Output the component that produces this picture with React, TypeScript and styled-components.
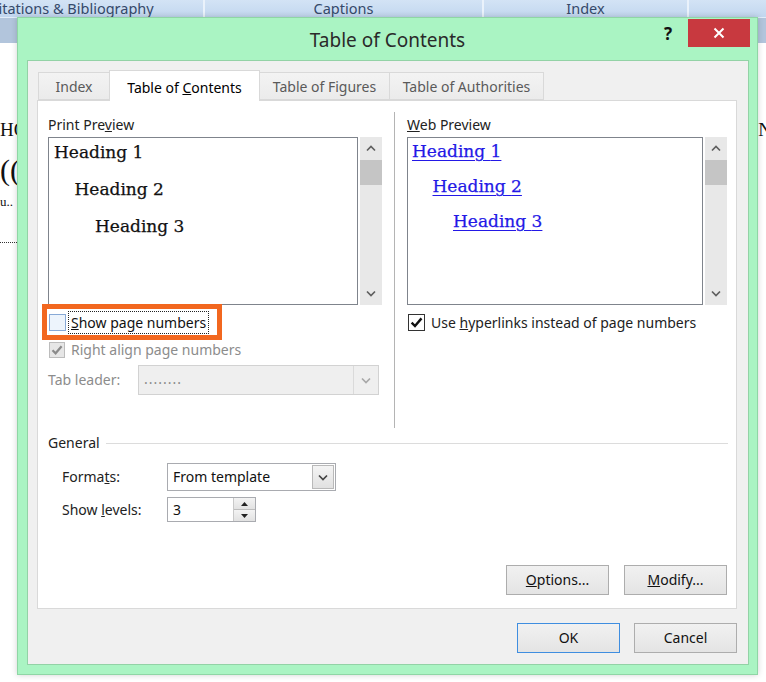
import React from "react";
import styled, { createGlobalStyle } from "styled-components";

const GlobalStyle = createGlobalStyle`
  html, body {
    margin: 0;
    padding: 0;
    background: #fff;
  }
  body {
    font-family: "Noto Sans", "Open Sans", sans-serif;
  }
  * {
    box-sizing: border-box;
  }
`;

/**
 * Word window behind the dialog
 */
const Desktop = styled.div`
  position: relative;
  width: 766px;
  height: 682px;
  overflow: hidden;
  background: #fff;
`;

const RibbonTabs = styled.div`
  display: flex;
  height: 17px;
  background: linear-gradient(#d3e3f5, #c2d7ef);
  overflow: hidden;
`;

const RibbonTab = styled.div<{ $w: number; $shift?: number }>`
  flex: 0 0 ${(p) => p.$w}px;
  margin-left: ${(p) => p.$shift ?? 0}px;
  border-right: 2px solid #eaf2fb;
  text-align: center;
  font-size: 14.5px;
  line-height: 16px;
  color: #35496a;
  white-space: nowrap;
  overflow: hidden;
`;

const RibbonBand = styled.div`
  height: 26px;
  background: #b2c5dc;
  border-top: 1px solid #e2edf9;
`;

const Doc = styled.div`
  padding-top: 75px;
  font-family: "Liberation Serif", serif;
  color: #111;
`;

const DocLine = styled.div<{ $size: number; $lh: number; $gap?: number }>`
  display: flex;
  justify-content: space-between;
  width: 772px;
  margin-top: ${(p) => p.$gap ?? 0}px;
  font-size: ${(p) => p.$size}px;
  line-height: ${(p) => p.$lh}px;
  white-space: nowrap;
`;

const DottedRule = styled.div`
  width: 17px;
  margin-top: 32px;
  border-top: 1px dotted #333;
`;

/**
 * Dialog window
 */
const Dialog = styled.div`
  position: absolute;
  left: 17px;
  top: 17px;
  width: 741px;
  height: 658px;
  display: flex;
  flex-direction: column;
  background: #aaf4c3;
  border: 1px solid #8fd6a5;
  box-shadow: 0 0 6px rgba(0, 0, 0, 0.18);
`;

const TitleBar = styled.div`
  display: grid;
  grid-template-columns: 1fr auto 1fr;
  height: 42px;
`;

const TitleText = styled.div`
  grid-column: 2;
  padding-top: 10px;
  font-size: 19px;
  line-height: 24px;
  color: #2a2a2a;
`;

const TitleControls = styled.div`
  grid-column: 3;
  justify-self: end;
  display: flex;
  align-items: center;
  gap: 16px;
  height: 28px;
  margin: 1px 7px 0 0;
`;

const HelpMark = styled.span`
  font-size: 17px;
  font-weight: 700;
  color: #111;
`;

const CloseButton = styled.div`
  width: 62px;
  height: 28px;
  display: flex;
  align-items: center;
  justify-content: center;
  background: #c8393f;
`;

const Body = styled.div`
  flex: 1;
  display: flex;
  flex-direction: column;
  margin: 0 8px 9px 9px;
  padding: 9px 11px 11px 9px;
  background: #f0f0f0;
  border: 1px solid #93d2a6;
`;

const TabsRow = styled.div`
  position: relative;
  z-index: 2;
  display: flex;
  align-items: flex-end;
  height: 31px;
  margin-left: 1px;
`;

const Tab = styled.div<{ $w: number; $active?: boolean }>`
  width: ${(p) => p.$w}px;
  height: ${(p) => (p.$active ? 31 : 28)}px;
  margin-bottom: ${(p) => (p.$active ? 0 : 1)}px;
  margin-left: -1px;
  border: 1px solid #d9d9d9;
  border-bottom: ${(p) => (p.$active ? "none" : "1px solid #d9d9d9")};
  background: ${(p) => (p.$active ? "#fff" : "linear-gradient(#f3f3f3, #ebebeb)")};
  color: ${(p) => (p.$active ? "#000" : "#5a5a5a")};
  font-size: 14px;
  line-height: ${(p) => (p.$active ? 34 : 28)}px;
  text-align: center;
  white-space: nowrap;
  &:first-child {
    margin-left: 0;
  }
`;

const TabPanel = styled.div`
  display: flex;
  flex-direction: column;
  height: 509px;
  margin-top: -1px;
  padding: 11px 9px 13px 10px;
  background: #fff;
  border: 1px solid #d9d9d9;
`;

const TopSection = styled.div`
  display: grid;
  grid-template-columns: 334px 1px 1fr;
  column-gap: 12px;
  height: 316px;
`;

const Column = styled.div`
  display: flex;
  flex-direction: column;
`;

const Divider = styled.div`
  background: #b4b4b4;
`;

const Label = styled.div<{ $muted?: boolean }>`
  font-size: 14px;
  line-height: 18px;
  color: ${(p) => (p.$muted ? "#8c8c8c" : "#222")};
  white-space: nowrap;
`;

const GroupLabel = styled(Label)`
  margin-top: 4px;
`;

const PreviewRow = styled.div`
  display: flex;
  gap: 2px;
  height: 168px;
  margin-top: 3px;
`;

const ListBox = styled.div<{ $pad: number }>`
  flex: 1;
  display: flex;
  flex-direction: column;
  gap: 9px;
  padding-left: ${(p) => p.$pad}px;
  background: #fff;
  border: 1px solid #7f848c;
`;

const Entry = styled.div<{ $level: number; $link?: boolean }>`
  padding-left: ${(p) => (p.$level - 1) * 20.5}px;
  font-family: "DejaVu Serif", "Liberation Serif", serif;
  font-size: 17px;
  line-height: ${(p) => (p.$link ? 26 : 28)}px;
  color: ${(p) => (p.$link ? "#2318e6" : "#111")};
  text-decoration: ${(p) => (p.$link ? "underline" : "none")};
  text-underline-offset: 3px;
  -webkit-text-stroke: 0.25px currentColor;
  white-space: nowrap;
`;

const ScrollBar = styled.div`
  width: 22px;
  display: flex;
  flex-direction: column;
  background: #e8e8e8;
`;

const ScrollArrow = styled.div`
  height: 23px;
  display: flex;
  align-items: center;
  justify-content: center;
`;

const Thumb = styled.div`
  height: 25px;
  background: #c5c5c5;
`;

const Spacer = styled.div`
  flex: 1;
`;

const HighlightRow = styled.div`
  display: flex;
  align-items: center;
  width: 180px;
  height: 36px;
  margin: -1px 0 0 -6px;
  padding-left: 2px;
  border: 5px solid #f2671f;
`;

const Box = styled.div<{ $size: number; $disabled?: boolean; $hover?: boolean }>`
  flex: 0 0 ${(p) => p.$size}px;
  width: ${(p) => p.$size}px;
  height: ${(p) => p.$size}px;
  display: flex;
  align-items: center;
  justify-content: center;
  border: 1px solid
    ${(p) => (p.$disabled ? "#bcbcbc" : p.$hover ? "#88a9d6" : "#333")};
  background: ${(p) => (p.$disabled ? "#e6e6e6" : p.$hover ? "#edf4fc" : "#fff")};
`;

const FocusLabel = styled.span`
  margin-left: 3px;
  padding: 0 2px;
  font-size: 14px;
  line-height: 21px;
  color: #111;
  outline: 1px dotted #222;
  white-space: nowrap;
`;

const CheckRow = styled.div<{ $gap: number }>`
  display: flex;
  align-items: center;
  gap: 6px;
  height: 17px;
  margin: ${(p) => p.$gap}px 0 0 1px;
`;

const FieldRow = styled.div<{ $gap: number; $h: number; $indent?: number }>`
  display: flex;
  align-items: center;
  height: ${(p) => p.$h}px;
  margin-top: ${(p) => p.$gap}px;
  padding-left: ${(p) => p.$indent ?? 0}px;
`;

const FieldLabel = styled(Label)<{ $w: number }>`
  flex: 0 0 ${(p) => p.$w}px;
`;

const Combo = styled.div<{ $w: number; $disabled?: boolean }>`
  display: flex;
  width: ${(p) => p.$w}px;
  height: 100%;
  border: 1px solid ${(p) => (p.$disabled ? "#d2d2d2" : "#a9abb0")};
  background: ${(p) => (p.$disabled ? "#efefef" : "#fff")};
`;

const ComboText = styled.div<{ $muted?: boolean }>`
  flex: 1;
  padding-left: 5px;
  font-size: 14px;
  line-height: 26px;
  letter-spacing: ${(p) => (p.$muted ? "1px" : "normal")};
  color: ${(p) => (p.$muted ? "#8a8a8a" : "#111")};
  white-space: nowrap;
`;

const DropButton = styled.div<{ $disabled?: boolean }>`
  width: ${(p) => (p.$disabled ? 25 : 22)}px;
  display: flex;
  align-items: center;
  justify-content: center;
  margin: ${(p) => (p.$disabled ? 0 : "1px")};
  border-left: 1px solid ${(p) => (p.$disabled ? "#dadada" : "#b5b5b5")};
  background: ${(p) => (p.$disabled ? "transparent" : "linear-gradient(#f4f4f4, #e1e1e1)")};
  border: ${(p) => (p.$disabled ? undefined : "1px solid #b9b9b9")};
`;

const SpinBox = styled.div`
  display: flex;
  width: 89px;
  height: 100%;
  border: 1px solid #a9abb0;
  background: #fff;
`;

const SpinButtons = styled.div`
  width: 22px;
  display: flex;
  flex-direction: column;
  border-left: 1px solid #c9c9c9;
`;

const SpinHalf = styled.div`
  flex: 1;
  display: flex;
  align-items: center;
  justify-content: center;
  background: linear-gradient(#f3f3f3, #e2e2e2);
  & + & {
    border-top: 1px solid #bdbdbd;
  }
`;

const GeneralHeader = styled.div`
  display: flex;
  align-items: center;
  gap: 6px;
  margin-top: 6px;
`;

const Rule = styled.div`
  flex: 1;
  height: 1px;
  margin-right: -1px;
  background: #dcdcdc;
`;

const ButtonRow = styled.div<{ $gap: number }>`
  display: flex;
  justify-content: flex-end;
  gap: ${(p) => p.$gap}px;
`;

const PanelButtons = styled(ButtonRow)`
  margin-top: auto;
`;

const DialogButtons = styled(ButtonRow)`
  margin-top: 14px;
`;

const Button = styled.div<{ $primary?: boolean }>`
  width: 103px;
  height: 30px;
  border: 1px solid ${(p) => (p.$primary ? "#3f8ee0" : "#adadad")};
  background: linear-gradient(#f1f1f1, #e4e4e4);
  font-size: 14px;
  line-height: 28px;
  text-align: center;
  color: #111;
`;

const Chevron: React.FC<{ dir: "up" | "down"; color?: string }> = ({
  dir,
  color = "#5f5f5f",
}) => (
  <svg width="10" height="7" viewBox="0 0 10 7">
    <polyline
      points={dir === "up" ? "1,5.5 5,1.5 9,5.5" : "1,1.5 5,5.5 9,1.5"}
      fill="none"
      stroke={color}
      strokeWidth="1.7"
    />
  </svg>
);

const Triangle: React.FC<{ dir: "up" | "down" }> = ({ dir }) => (
  <svg width="7" height="4" viewBox="0 0 7 4">
    <polygon
      points={dir === "up" ? "0,4 3.5,0 7,4" : "0,0 3.5,4 7,0"}
      fill="#222"
    />
  </svg>
);

const Tick: React.FC<{ color: string; size: number }> = ({ color, size }) => (
  <svg width={size} height={size} viewBox="0 0 12 12">
    <path
      d="M1.5 6.2 L4.6 9.3 L10.6 2.2"
      fill="none"
      stroke={color}
      strokeWidth="2.2"
    />
  </svg>
);

const Scroll: React.FC = () => (
  <ScrollBar>
    <ScrollArrow>
      <Chevron dir="up" />
    </ScrollArrow>
    <Thumb />
    <Spacer />
    <ScrollArrow>
      <Chevron dir="down" />
    </ScrollArrow>
  </ScrollBar>
);

const headings = [1, 2, 3];

export default function App() {
  return (
    <Desktop>
      <GlobalStyle />
      <RibbonTabs>
        <RibbonTab $w={265} $shift={-60}>
          Citations &amp; Bibliography
        </RibbonTab>
        <RibbonTab $w={279}>Captions</RibbonTab>
        <RibbonTab $w={205}>Index</RibbonTab>
        <RibbonTab $w={120} />
      </RibbonTabs>
      <RibbonBand />
      <Doc>
        <DocLine $size={19} $lh={24}>
          <span>HOW TO INSERT A TABLE OF CONTENTS</span>
          <span>IN</span>
        </DocLine>
        <DocLine $size={30} $lh={34} $gap={11}>
          <span>((</span>
        </DocLine>
        <DocLine $size={13} $lh={16} $gap={7}>
          <span>u..</span>
        </DocLine>
        <DottedRule />
      </Doc>

      <Dialog>
        <TitleBar>
          <TitleText>Table of Contents</TitleText>
          <TitleControls>
            <HelpMark>?</HelpMark>
            <CloseButton>
              <svg width="12" height="12" viewBox="0 0 12 12">
                <path d="M1.5 1.5 L10.5 10.5 M10.5 1.5 L1.5 10.5" stroke="#fff" strokeWidth="2" />
              </svg>
            </CloseButton>
          </TitleControls>
        </TitleBar>

        <Body>
          <TabsRow>
            <Tab $w={72}>Index</Tab>
            <Tab $w={151} $active>
              Table of <u>C</u>ontents
            </Tab>
            <Tab $w={131}>Table of Figures</Tab>
            <Tab $w={155}>Table of Authorities</Tab>
          </TabsRow>

          <TabPanel>
            <TopSection>
              <Column>
                <GroupLabel>
                  Print Pre<u>v</u>iew
                </GroupLabel>
                <PreviewRow>
                  <ListBox $pad={5}>
                    {headings.map((n) => (
                      <Entry key={n} $level={n}>
                        Heading {n}
                      </Entry>
                    ))}
                  </ListBox>
                  <Scroll />
                </PreviewRow>

                <HighlightRow>
                  <Box $size={17} $hover />
                  <FocusLabel>
                    <u>S</u>how page numbers
                  </FocusLabel>
                </HighlightRow>

                <CheckRow $gap={1}>
                  <Box $size={16} $disabled>
                    <Tick color="#8a8a8a" size={12} />
                  </Box>
                  <Label $muted>Right align page numbers</Label>
                </CheckRow>

                <FieldRow $gap={7} $h={30}>
                  <FieldLabel $w={90} $muted>
                    Tab leader:
                  </FieldLabel>
                  <Combo $w={241} $disabled>
                    <ComboText $muted>........</ComboText>
                    <DropButton $disabled>
                      <Chevron dir="down" color="#a8a8a8" />
                    </DropButton>
                  </Combo>
                </FieldRow>
              </Column>

              <Divider />

              <Column>
                <GroupLabel>
                  <u>W</u>eb Preview
                </GroupLabel>
                <PreviewRow>
                  <ListBox $pad={4}>
                    {headings.map((n) => (
                      <Entry key={n} $level={n} $link>
                        Heading {n}
                      </Entry>
                    ))}
                  </ListBox>
                  <Scroll />
                </PreviewRow>
                <CheckRow $gap={9}>
                  <Box $size={17}>
                    <Tick color="#111" size={13} />
                  </Box>
                  <Label>
                    Use <u>h</u>yperlinks instead of page numbers
                  </Label>
                </CheckRow>
              </Column>
            </TopSection>

            <GeneralHeader>
              <Label>General</Label>
              <Rule />
            </GeneralHeader>

            <FieldRow $gap={11} $h={28} $indent={14}>
              <FieldLabel $w={105}>
                Forma<u>t</u>s:
              </FieldLabel>
              <Combo $w={169}>
                <ComboText>From template</ComboText>
                <DropButton>
                  <Chevron dir="down" color="#444" />
                </DropButton>
              </Combo>
            </FieldRow>

            <FieldRow $gap={6} $h={25} $indent={14}>
              <FieldLabel $w={105}>
                Show <u>l</u>evels:
              </FieldLabel>
              <SpinBox>
                <ComboText style={{ lineHeight: "23px" }}>3</ComboText>
                <SpinButtons>
                  <SpinHalf>
                    <Triangle dir="up" />
                  </SpinHalf>
                  <SpinHalf>
                    <Triangle dir="down" />
                  </SpinHalf>
                </SpinButtons>
              </SpinBox>
            </FieldRow>

            <PanelButtons $gap={15}>
              <Button>
                <u>O</u>ptions...
              </Button>
              <Button>
                <u>M</u>odify...
              </Button>
            </PanelButtons>
          </TabPanel>

          <DialogButtons $gap={14}>
            <Button $primary>OK</Button>
            <Button>Cancel</Button>
          </DialogButtons>
        </Body>
      </Dialog>
    </Desktop>
  );
}
